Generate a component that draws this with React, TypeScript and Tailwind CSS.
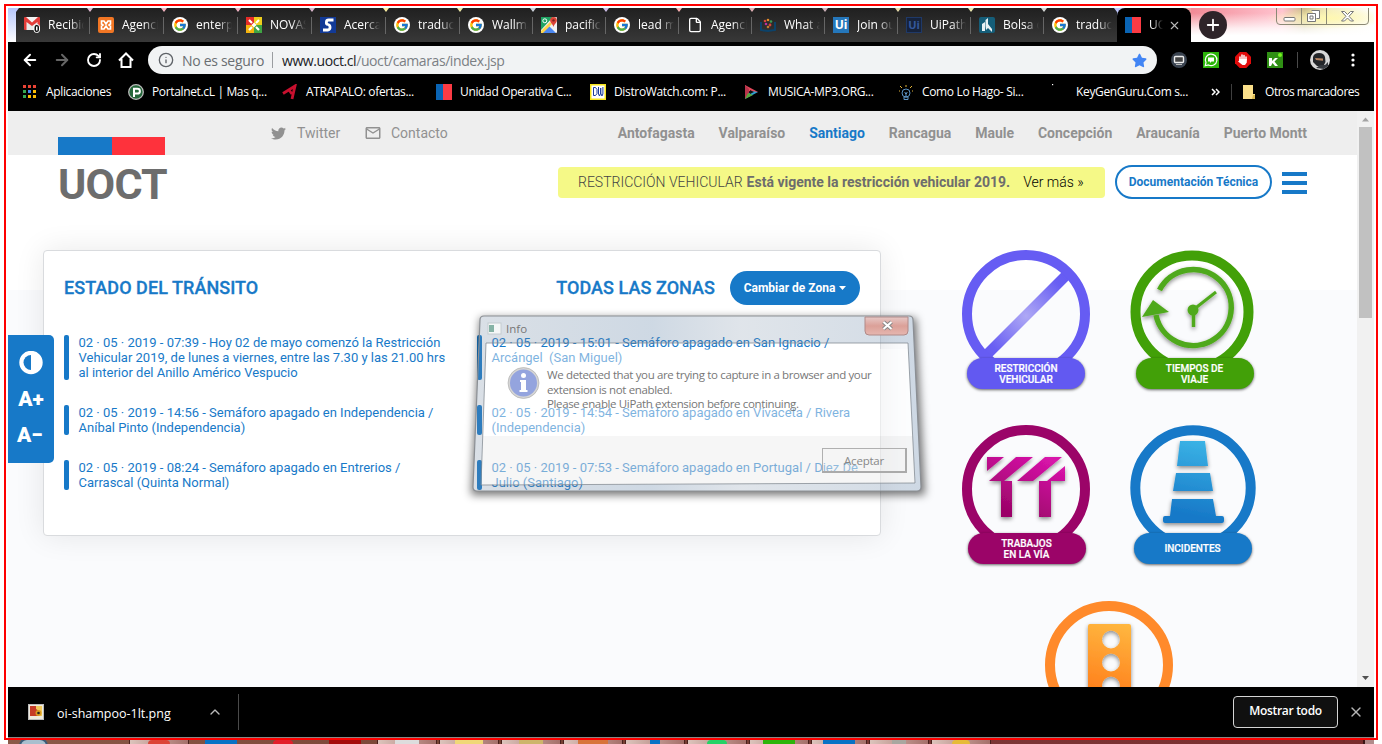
import React from "react";
import { ArrowLeft, ArrowRight, RotateCw, Info, ChevronUp, X, Plus, File } from "lucide-react";
import { FaTwitter, FaStar } from "react-icons/fa";
import { FcGoogle } from "react-icons/fc";
import { MdMailOutline } from "react-icons/md";

const ui = "font-['Open_Sans','Noto_Sans',sans-serif]";

function Flag() {
  return (
    <div className="flex h-4 w-4 shrink-0">
      <div className="w-[7px] bg-[#0a64b4]" />
      <div className="w-[9px] bg-[#fb3b44]" />
    </div>
  );
}

function G() {
  return (
    <span className="flex h-4 w-4 items-center justify-center rounded-full bg-white">
      <FcGoogle size={14} />
    </span>
  );
}

const fav: Record<string, React.ReactNode> = {
  gmail: (
    <svg width="16" height="16" viewBox="0 0 16 16">
      <rect y="0" width="16" height="13" rx="1" fill="#e23c39" />
      <path d="M2.500 13V5L8 9l5.500-4v8z" fill="#e8e8e8" />
      <path d="M2 0h12L8 5.500z" fill="#f3f3f3" />
      <rect x="10" y="7.500" width="5.500" height="8" rx="2.500" fill="#111" stroke="#fff" strokeWidth="1" />
      <rect x="12" y="9.500" width="1.500" height="4" fill="#fff" />
    </svg>
  ),
  xampp: (
    <svg width="16" height="16" viewBox="0 0 16 16">
      <rect width="16" height="16" rx="2" fill="#f27624" />
      <path d="M3.500 4H6l2 3 2-3h2.500v3l-1.500 1 1.500 1v3H10L8 9l-2 3H3.500V9L5 8 3.500 7z" fill="none" stroke="#fff" strokeWidth="1.600" />
    </svg>
  ),
  nova: (
    <svg width="16" height="16" viewBox="0 0 16 16">
      <rect width="8" height="8" fill="#e52c27" />
      <rect x="8" width="8" height="8" fill="#efcf1c" />
      <rect y="8" width="8" height="8" fill="#f5b40f" />
      <rect x="8" y="8" width="8" height="8" fill="#3fa443" />
      <path d="M3 3l3 3M13 3l-3 3M3 13l3-3M13 13l-3-3" stroke="#fff" strokeWidth="2.200" />
      <path d="M8 5.500L10.500 8 8 10.500 5.500 8z" fill="#fff" />
    </svg>
  ),
  s: (
    <svg width="16" height="16" viewBox="0 0 16 16">
      <rect width="16" height="16" fill="#123a97" />
      <path d="M13.500 3H8.500C6 3 5.500 7 8 7.500s3 4.500 0 5.500H3" fill="none" stroke="#fff" strokeWidth="2.800" />
    </svg>
  ),
  maps: (
    <svg width="16" height="16" viewBox="0 0 16 16">
      <rect width="16" height="16" rx="1" fill="#f2f2f2" />
      <path d="M0 0h12L0 13z" fill="#1fa463" />
      <path d="M1 16l7-7 7 7z" fill="#4b87f0" />
      <path d="M0 14L9 5l2 2-9 9H0z" fill="#fdd349" />
      <circle cx="3.800" cy="3.800" r="2" fill="none" stroke="#fff" />
      <path d="M12.500 0a3.400 3.400 0 0 1 3.400 3.400c0 2.400-2.700 3.400-3.400 6.600-.7-3.200-3.400-4.200-3.400-6.600A3.400 3.400 0 0 1 12.500 0z" fill="#dc4437" />
      <circle cx="12.500" cy="3.400" r="1.200" fill="#7c231b" />
    </svg>
  ),
  file: <File size={16} color="#fff" strokeWidth={2} />,
  dots: (
    <svg width="16" height="16" viewBox="0 0 16 16">
      <path d="M1 5v8l7 1 7-1V5" fill="none" stroke="#0c4269" strokeWidth="2" />
      <g>
        <circle cx="5" cy="4" r="1.300" fill="#d6453a" /><circle cx="8" cy="3" r="1.300" fill="#e08a2b" />
        <circle cx="11" cy="4.500" r="1.300" fill="#3f9b55" /><circle cx="6" cy="7" r="1.300" fill="#b534a0" />
        <circle cx="10" cy="8" r="1.400" fill="#d6453a" /><circle cx="8" cy="10" r="1.300" fill="#c07a2b" />
      </g>
    </svg>
  ),
  ui: <span className="flex h-4 w-4 items-center justify-center bg-[#2577bb] text-[12px] font-bold text-white">Ui</span>,
  ui2: <span className="flex h-4 w-4 items-center justify-center border border-[#1f3968] bg-[#17233b] text-[11px] font-bold text-[#35599b]">Ui</span>,
  bolsa: (
    <svg width="16" height="16" viewBox="0 0 16 16">
      <rect width="16" height="16" rx="2" fill="#155e79" />
      <path d="M3 14V7l3-2v9zM6.500 9V3L9 1v6l4 5v3l-4-4-2 2z" fill="#e9f1f4" />
    </svg>
  ),
};

const tabs: [string, string][] = [
  ["gmail", "Recibidos"], ["xampp", "Agencia"], ["g", "enterprise"], ["nova", "NOVASUR"], ["s", "Acerca de"],
  ["g", "traductor"], ["g", "Wallmart"], ["maps", "pacifico"], ["g", "lead m"], ["file", "Agencia"],
  ["dots", "What a"], ["ui", "Join our"], ["ui2", "UiPath"], ["bolsa", "Bolsa d"], ["g", "traductor"],
];

function TabStrip() {
  return (
    <div className="flex h-[34px] bg-[linear-gradient(90deg,#b9c8ff_0%,#e5b7c8_7%,#ffb3bd_14%,#d9b4d0_22%,#fff3a0_28%,#eee9a4_33%,#b7c3ff_42%,#ffb0b0_48%,#c9b0b8_60%,#f7f2a0_68%,#b9c3ff_82%,#ef9d9d_86%,#f6a5aa_91%,#fff_96%)]">
      <div className="h-full w-2 bg-gradient-to-b from-[#b6c6fb] to-white" />
      <div className="flex shrink-0">
        {tabs.map(([k, label], i) => (
          <div key={i} className={"flex h-[34px] items-center overflow-hidden bg-gradient-to-b from-[#202020] to-[#383838] pl-2 [clip-path:polygon(0_4px,3px_0,calc(100%-3px)_0,100%_4px,100%_100%,0_100%)] " + (i < 6 ? "w-[74px]" : "w-[73px]")}>
            <div className="flex h-4 w-4 shrink-0 items-center justify-center">{k === "g" ? <G /> : fav[k]}</div>
            <div className="ml-2 w-[36px] shrink-0 overflow-hidden text-[12px] whitespace-nowrap text-white [mask-image:linear-gradient(90deg,#000_60%,transparent)]">{label}</div>
            {i < 14 && <div className="ml-auto h-[17px] w-px shrink-0 bg-[#666]" />}
          </div>
        ))}
      </div>
      <div className="flex w-[74px] shrink-0 items-center rounded-t-lg bg-black pl-2">
        <Flag />
        <div className="ml-2 w-[14px] overflow-hidden text-[12px] whitespace-nowrap text-white [mask-image:linear-gradient(90deg,#000_20%,transparent)]">UOCT</div>
        <X size={13} color="#b9b9b9" className="ml-[5px]" />
      </div>
      <div className="flex flex-1 bg-[radial-gradient(ellipse_at_75%_30%,#fff8b0_0%,transparent_32%),linear-gradient(180deg,transparent_15%,#ffffffcc_60%,#fff_80%),linear-gradient(90deg,#f28a96,#ffc4d0_50%,#c9b98a_62%,#f3ecc0_75%,#fff)] pl-2">
        <div className="mt-[3px] flex h-7 w-7 items-center justify-center rounded-full bg-[#2e2429]"><Plus size={18} color="#fff" strokeWidth={2.4} /></div>
        <svg className="ml-auto mr-[4px]" width="94" height="18" viewBox="0 0 94 18" fill="none">
          <path d="M.5 0v13q0 3.500 3.500 3.500h85q3.500 0 3.500-3.500V0M25.500 0v16.500M50.500 0v16.500" stroke="#8b8975" />
          <rect x="8" y="9.500" width="11" height="3.500" rx="1" fill="#fff" stroke="#777" />
          <path d="M35.500 2.500h8v8h-3M31.500 5.500h8v8h-8zM34 8h3v3h-3z" fill="#fff" stroke="#777" />
          <path d="M65.500 3.500h3l3 3 3-3h3l-4.500 4.800 4.500 4.700h-3l-3-3-3 3h-3l4.500-4.700z" fill="#fff" stroke="#777" />
        </svg>
      </div>
    </div>
  );
}

function Toolbar() {
  return (
    <div className="flex h-[36px] items-center pl-[13px]">
      <ArrowLeft size={18} color="#fff" strokeWidth={2.6} />
      <ArrowRight size={18} color="#666" strokeWidth={2.6} className="ml-[14px]" />
      <RotateCw size={16} color="#fff" strokeWidth={2.8} className="ml-[15px]" />
      <svg className="ml-[15px]" width="18" height="18" viewBox="0 0 18 18"><path d="M2 9.500L9 2.500l7 7M4.500 8v8h9V8" fill="none" stroke="#fff" strokeWidth="2" /></svg>
      <div className="ml-[13px] flex h-7 w-[1009px] items-center rounded-full bg-[#f1f3f4] pl-[10px] text-[14px]">
        <Info size={16} color="#5f6368" />
        <span className="ml-2 w-[82px] whitespace-nowrap text-[#6a6e72] tracking-[-0.3px]">No es seguro</span>
        <div className="ml-2 h-4 w-px bg-[#9a9da0]" />
        <span className="ml-[9px] whitespace-nowrap text-[#7b7f84] tracking-[-0.42px]"><span className="text-[#202124]">www.uoct.cl</span>/uoct/camaras/index.jsp</span>
        <FaStar size={15} color="#4285f4" className="ml-auto mr-[10px]" />
      </div>
      <svg className="ml-[14px]" width="16" height="16" viewBox="0 0 16 16"><circle cx="8" cy="8" r="8" fill="#3a4350" /><rect x="3.500" y="4.500" width="9" height="6" rx="1" fill="#444" stroke="#eee" strokeWidth="1.400" /><path d="M5 12.500h6" stroke="#bbb" /></svg>
      <svg className="ml-4" width="16" height="16" viewBox="0 0 16 16"><rect width="16" height="16" fill="#2cb50a" /><path d="M2.200 13.800l.8-3.300A5.800 5.800 0 1 1 5.500 13z" fill="none" stroke="#fff" strokeWidth="1.200" /><path d="M5 5.500h6v4H8.500L7 11V9.500H5z" fill="#fff" /></svg>
      <svg className="ml-4" width="16" height="16" viewBox="0 0 16 16"><path d="M4.700 0h6.600L16 4.700v6.600L11.300 16H4.700L0 11.300V4.700z" fill="#e20b0b" /><path d="M5 8V5M7 7V3M9 7V3.500M11 8V5" stroke="#fff" strokeWidth="1.500" strokeLinecap="round" /><path d="M4.300 7h7.500v3.500L10 13H7.500L3 9.500l1-.8z" fill="#fff" /></svg>
      <svg className="ml-4" width="16" height="16" viewBox="0 0 16 16"><rect width="16" height="16" fill="#2f8f14" /><path d="M2 6h3v3l3-3h3L7.500 9.500 11 14H8l-2.500-3L4 14H2z" fill="#fff" /><circle cx="13" cy="3" r="2" fill="#74f51d" /></svg>
      <div className="ml-[14px] h-4 w-px bg-[#4a4a4a]" />
      <svg className="ml-[12px]" width="20" height="20" viewBox="0 0 20 20"><circle cx="10" cy="10" r="10" fill="#d8d8d8" /><path d="M3 12V7q1-4 6-4t6 4l.5 5-2 4H7z" fill="#242629" /><path d="M5 8l8 .5v2.300L6 10z" fill="#b98663" /><path d="M6 18l4-3h5l3-3v4l-4 3z" fill="#35383d" /></svg>
      <svg className="ml-[20px]" width="6" height="16" viewBox="0 0 6 16" fill="#fff"><circle cx="3" cy="3" r="1.600" /><circle cx="3" cy="8" r="1.600" /><circle cx="3" cy="13" r="1.600" /></svg>
    </div>
  );
}

const marks: [React.ReactNode, string][] = [
  [<svg key="p" width="16" height="16" viewBox="0 0 16 16"><circle cx="8" cy="8" r="7.300" fill="#24673a" stroke="#bbb" strokeWidth="1.300" /><path d="M6 13V4.800h3.500a2.400 2.400 0 0 1 0 4.800H6" fill="none" stroke="#fff" strokeWidth="2" /></svg>, "Portalnet.cL | Mas q..."],
  [<svg key="a" width="16" height="16" viewBox="0 0 16 16"><path d="M1 9.500L13 2l-3 13M7 6l3 4" fill="none" stroke="#c8102e" strokeWidth="2.800" /></svg>, "ATRAPALO: ofertas..."],
  [<Flag key="f" />, "Unidad Operativa C..."],
  [<svg key="d" width="16" height="16" viewBox="0 0 16 16"><rect x=".75" y=".75" width="14.500" height="14.500" fill="#fff" stroke="#f7e51c" strokeWidth="1.500" /><path d="M3.500 3.500v8M3.500 3.500h2l1.500 2v4l-1.500 2h-2M8.500 3v7l1 2 1.200-3V4v5l1.200 3 1-2V3" fill="none" stroke="#1c3d9c" /></svg>, "DistroWatch.com: P..."],
  [<svg key="m" width="16" height="16" viewBox="0 0 16 16"><path d="M1 1l13 7-5 1-8-4z" fill="#e3485a" /><path d="M1 1v14l4-3V5z" fill="#b8344b" /><path d="M1 15l13-7-7-1z" fill="#2f9fd0" /><path d="M1 15l3-6 5 2z" fill="#5aa53b" /><path d="M6 6l4 2-4 2z" fill="#111" /></svg>, "MUSICA-MP3.ORG..."],
  [<svg key="c" width="16" height="16" viewBox="0 0 16 16" fill="none"><circle cx="8" cy="9" r="4" stroke="#5c93c4" /><path d="M6 13h4v2.500H6zM8 8v5M6.500 8.500L8 10l1.500-1.500" stroke="#5c93c4" /><path d="M8 1v2M2 2l2 2M14 2l-2 2M1 7h1M14 7h1" stroke="#e1b338" /></svg>, "Como Lo Hago- Si..."],
  [<svg key="k" width="16" height="20" viewBox="0 0 16 20"><rect y="2" width="1.200" height="1.200" fill="#fff" /></svg>, "KeyGenGuru.Com s..."],
];

const appColors = ["bg-[#ea4335]", "bg-[#ea4335]", "bg-[#ea4335]", "bg-[#34a853]", "bg-[#4285f4]", "bg-[#fbbc05]", "bg-[#34a853]", "bg-[#fbbc05]", "bg-[#fbbc05]"];

function Bookmarks() {
  return (
    <div className="flex h-[33px] items-center overflow-hidden pb-[6px] text-[12px] tracking-[-0.35px] whitespace-nowrap text-white">
      <div className="flex w-[120px] shrink-0 items-center pl-[15px]">
        <div className="grid grid-cols-3 gap-[2px]">{appColors.map((c, i) => <div key={i} className={"h-[3px] w-[3px] " + c} />)}</div>
        <span className="ml-[10px]">Aplicaciones</span>
      </div>
      {marks.map(([ic, t], i) => (
        <div key={i} className="flex h-5 w-[154px] shrink-0 items-center gap-2">{ic}<span>{t}</span></div>
      ))}
      <span className="w-[18px] pl-[5px]"><svg width="9" height="8" viewBox="0 0 9 8" fill="none" className="mt-px"><path d="M1 1l3 3-3 3M5 1l3 3-3 3" stroke="#fff" strokeWidth="1.500" /></svg></span>
      <div className="ml-[7px] h-4 w-px bg-[#3f3f3f]" />
      <svg className="ml-[10px]" width="14" height="16" viewBox="0 0 14 16"><path d="M1 1h10v9h2v5H1z" fill="#fbe08a" /><path d="M10 15l1-4h2v4z" fill="#d9b84e" /></svg>
      <span className="ml-[9px] tracking-[-0.45px]">Otros marcadores</span>
    </div>
  );
}

const cities = ["Antofagasta", "Valparaíso", "Santiago", "Rancagua", "Maule", "Concepción", "Araucanía", "Puerto Montt"];

function Header() {
  return (
    <>
      <div className="flex h-[44px] items-center bg-[#eee] text-[14px] text-[#919191]">
        <div className="ml-[50px] flex h-[18px] w-[107px] self-end"><div className="flex-1 bg-[#1779c8]" /><div className="flex-1 bg-[#fe323c]" /></div>
        <FaTwitter size={15} className="ml-[106px]" />
        <span className="ml-[11px] w-[44px]">Twitter</span>
        <MdMailOutline size={18} className="ml-[23px]" />
        <span className="ml-[9px]">Contacto</span>
        <nav className="mr-[50px] ml-auto flex gap-[23.900px] font-bold">
          {cities.map((c) => <span key={c} className={c === "Santiago" ? "text-[#1779c8]" : ""}>{c}</span>)}
        </nav>
      </div>
      <div className="flex h-[95px] items-start pr-[50px]">
        <div className="mt-[4px] ml-[50px] text-[43px] leading-[50px] font-bold tracking-[-0.8px] text-[#6d6d6d]">UOCT</div>
        <div className="mt-[12px] ml-auto flex h-[31px] w-[547px] items-center rounded-[4px] bg-[#f5f987] pl-5 text-[14px] whitespace-nowrap text-[#6d6d6d]">
          <span className="font-light text-[#444]">RESTRICCIÓN VEHICULAR</span><b className="ml-1">Está vigente la restricción vehicular 2019.</b><span className="ml-[13px] font-light text-black">Ver más »</span>
        </div>
        <div className="mt-[10px] ml-[10px] flex h-[34px] w-[157px] items-center justify-center rounded-full border-2 border-[#1779c8] text-[12px] font-bold text-[#1779c8]">Documentación Técnica</div>
        <div className="mt-[17px] ml-[10px] flex w-[25px] flex-col gap-[5px]"><div className="h-1 bg-[#1779c8]" /><div className="h-1 bg-[#1779c8]" /><div className="h-1 bg-[#1779c8]" /></div>
      </div>
    </>
  );
}

const news: string[][] = [
  ["02 · 05 · 2019 - 07:39 - Hoy 02 de mayo comenzó la Restricción", "Vehicular 2019, de lunes a viernes, entre las 7.30 y las 21.00 hrs", "al interior del Anillo Américo Vespucio"],
  ["02 · 05 · 2019 - 15:01 - Semáforo apagado en San Ignacio /", "Arcángel\u00a0 (San Miguel)"],
  ["02 · 05 · 2019 - 14:56 - Semáforo apagado en Independencia /", "Aníbal Pinto (Independencia)"],
  ["02 · 05 · 2019 - 14:54 - Semáforo apagado en Vivaceta / Rivera", "(Independencia)"],
  ["02 · 05 · 2019 - 08:24 - Semáforo apagado en Entrerios /", "Carrascal (Quinta Normal)"],
  ["02 · 05 · 2019 - 07:53 - Semáforo apagado en Portugal / Diez De", "Julio (Santiago)"],
];

function Card() {
  return (
    <div className="ml-[35px] h-[286px] w-[838px] shrink-0 rounded-[4px] border border-[#d9dbde] bg-white px-5 pt-5 text-[#1779c8] shadow-[0_0_30px_rgba(0,0,0,0.09)]">
      <div className="flex h-[34px] items-center text-[18px] font-bold">
        <span className="pb-[2px] font-medium tracking-[0.05px] [-webkit-text-stroke:0.3px_#1779c8]">ESTADO DEL TRÁNSITO</span>
        <span className="ml-auto pb-[2px] font-medium tracking-[0.05px] [-webkit-text-stroke:0.3px_#1779c8]">TODAS LAS ZONAS</span>
        <div className="ml-[15px] flex h-[34px] w-[130px] items-center justify-center gap-1 rounded-full bg-[#1779c8] text-[12px] text-white">
          Cambiar de Zona<svg width="7" height="4" viewBox="0 0 7 4"><path d="M0 0h7L3.500 4z" fill="#fff" /></svg>
        </div>
      </div>
      <div className="mt-[30px] grid grid-cols-[413px_1fr] gap-y-[25px]">
        {news.map((lines, i) => (
          <div key={i} className="flex gap-[9.500px] text-[13px] leading-[15px] whitespace-nowrap">
            <div className="w-[5px] rounded-[2px] bg-[#1779c8]" />
            <div>{lines.map((l) => <div key={l}>{l}</div>)}</div>
          </div>
        ))}
      </div>
    </div>
  );
}

function Badge({ color, lines }: { color: string; lines: string[] }) {
  return (
    <div className={"relative mx-auto mt-[-20px] flex h-[31px] w-[118px] flex-col items-center justify-center rounded-full text-[10px] leading-[11px] font-medium text-white shadow-[0_1px_3px_rgba(0,0,0,0.6)] [-webkit-text-stroke:0.2px_#fff] " + color}>
      {lines.map((l) => <span key={l}>{l}</span>)}
    </div>
  );
}

function Icons() {
  return (
    <div className="ml-[81px] grid grid-cols-[128px_128px] content-start gap-x-[39px]">
      <svg width="0" height="0" className="absolute">
        <defs>
          <radialGradient id="rv" gradientUnits="userSpaceOnUse" cx="64" cy="66" r="56"><stop offset="0" stopColor="#aea8f5" /><stop offset=".8" stopColor="#695ff3" /><stop offset="1" stopColor="#665cf3" /></radialGradient>
          <linearGradient id="pk" gradientUnits="userSpaceOnUse" x1="80" y1="30" x2="50" y2="90"><stop offset="0" stopColor="#d813aa" /><stop offset="1" stopColor="#9b0468" /></linearGradient>
          <linearGradient id="bl" gradientUnits="userSpaceOnUse" x1="75" y1="15" x2="60" y2="90"><stop offset="0" stopColor="#3bb4e6" /><stop offset="1" stopColor="#1779c8" /></linearGradient>
          <linearGradient id="or" gradientUnits="userSpaceOnUse" x1="80" y1="22" x2="65" y2="88"><stop offset="0" stopColor="#ffb840" /><stop offset="1" stopColor="#ff841f" /></linearGradient>
          <filter id="sh" x="-30%" y="-30%" width="160%" height="160%"><feDropShadow dx="0" dy="2" stdDeviation="2" floodOpacity=".45" /></filter>
        </defs>
      </svg>
      <div className="h-[175px]">
        <svg width="128" height="128" viewBox="0 0 128 128" fill="none">
          <path d="M24 105.500L107 22.500" stroke="url(#rv)" strokeWidth="10.500" />
          <circle cx="64" cy="64" r="59" stroke="#665cf3" strokeWidth="10" />
        </svg>
        <Badge color="bg-[#6259f1]" lines={["RESTRICCIÓN", "VEHICULAR"]} />
      </div>
      <div className="h-[175px]">
        <svg width="128" height="128" viewBox="0 0 128 128" fill="none">
          <circle cx="63" cy="62" r="56.500" stroke="#42a008" strokeWidth="10" />
          <g filter="url(#sh)" stroke="#50a91b">
            <path d="M30.500 40A38 38 0 1 1 27 65" strokeWidth="5.500" />
            <path d="M24 50L40 62 13 67z" fill="#50a91b" stroke="none" />
            <circle cx="64" cy="60" r="5.500" fill="#50a91b" stroke="none" />
            <path d="M64 60l23-18" strokeWidth="3" /><path d="M64.500 60v17" strokeWidth="3.500" />
          </g>
        </svg>
        <div className="ml-[1px] pl-[2px]"><Badge color="bg-[#42a008]" lines={["TIEMPOS DE", "VIAJE"]} /></div>
      </div>
      <div className="h-[176px]">
        <svg width="128" height="128" viewBox="0 0 128 128" fill="none">
          <circle cx="64" cy="64" r="59" stroke="#9b0468" strokeWidth="10" />
          <path filter="url(#sh)" fill="url(#pk)" d="M25 32h17L25 46zM54 32h17L42 56H27zM83 32h17L71 56H55zM103 41v15H85zM39 56h11v36H39zM77 56h12v36H77z" />
        </svg>
        <div className="pl-px"><Badge color="bg-[#9b0468]" lines={["TRABAJOS", "EN LA VÍA"]} /></div>
      </div>
      <div className="h-[176px]">
        <svg width="128" height="128" viewBox="0 0 128 128" fill="none">
          <circle cx="64" cy="63" r="57.700" stroke="#1779c8" strokeWidth="10" />
          <path filter="url(#sh)" fill="url(#bl)" d="M51 16h25l3 25H48zM47 48h34l3 18H44zM43 74h41l3 17h6q2 0 2 2v3q0 2-2 2H36q-2 0-2-2v-3q0-2 2-2h5z" />
        </svg>
        <div className="-ml-[1px]"><Badge color="bg-[#1779c8]" lines={["INCIDENTES"]} /></div>
      </div>
      <div className="col-span-2 pl-[83px]">
        <svg width="128" height="128" viewBox="0 0 128 128" fill="none">
          <circle cx="64" cy="64" r="59" stroke="#ff8a2b" strokeWidth="10" />
          <path filter="url(#sh)" fill="url(#or)" fillRule="evenodd" d="M45 23h39q2 0 2 2v80H43V25q0-2 2-2zM57 38.500a9 9 0 1 0 18 0a9 9 0 1 0-18 0zM57 61.500a9 9 0 1 0 18 0a9 9 0 1 0-18 0zM57 84.500a9 9 0 1 0 18 0a9 9 0 1 0-18 0z" />
        </svg>
      </div>
    </div>
  );
}

function Dialog() {
  return (
    <div className={"absolute top-[300px] left-[460px] h-[210px] w-[480px] text-[11.5px] text-[#777] " + ui}>
      <svg width="480" height="210" viewBox="0 0 480 210" fill="none" className="absolute inset-0">
        <defs>
          <filter id="blur" x="-10%" y="-10%" width="120%" height="125%"><feGaussianBlur stdDeviation="4.500" /></filter>
          <mask id="out"><rect width="480" height="210" fill="#fff" /><path d="M24 16H449q4 0 4 4L461 187q0 4-4 4H17q-4 0-4-4L20 20q0-4 4-4z" fill="#000" /></mask>
          <linearGradient id="frame" x1="0" x2="1"><stop offset="0" stopColor="#7187a0" stopOpacity=".26" /><stop offset=".4" stopColor="#5c7fa4" stopOpacity=".3" /><stop offset=".6" stopColor="#7187a0" stopOpacity=".22" /><stop offset="1" stopColor="#5c7fa4" stopOpacity=".28" /></linearGradient>
          <linearGradient id="red" x1="0" y1="0" x2="0" y2="1"><stop offset="0" stopColor="#e6c8c6" /><stop offset=".5" stopColor="#dba098" /><stop offset="1" stopColor="#e6b7b0" /></linearGradient>
        </defs>
        <g mask="url(#out)"><path filter="url(#blur)" d="M20 18H456L465 195H11z" fill="#000" fillOpacity=".55" /></g>
        <path fillRule="evenodd" d="M24 16H449q4 0 4 4L461 187q0 4-4 4H17q-4 0-4-4L20 20q0-4 4-4zM26 43L21 185 455 183 448 43z" fill="url(#frame)" />
        <path d="M24 16H449q4 0 4 4L461 187q0 4-4 4H17q-4 0-4-4L20 20q0-4 4-4z" stroke="#8b8f94" strokeWidth="1.200" />
        <path d="M26 49H448L455 183 21 185z" fill="#fff" fillOpacity=".44" />
        <path d="M23 136H453L455 183 21 185z" fill="#000" fillOpacity=".035" />
        <path d="M26 43H448L455 183 21 185z" stroke="#7f878f" strokeOpacity=".75" />
        <path d="M405 17h43v14q0 4-4 4h-35q-4 0-4-4z" fill="url(#red)" stroke="#b08a88" />
        <path d="M423.500 22l8 7M431.500 22l-8 7" stroke="#888" strokeWidth="4" /><path d="M423.500 22l8 7M431.500 22l-8 7" stroke="#fff" strokeWidth="2" />
        <rect x="28" y="23" width="13" height="11" fill="#f5f7f7" stroke="#c4ccd0" /><rect x="29" y="25" width="5" height="7" fill="#86b3a6" />
        <circle cx="63.500" cy="83" r="14.500" fill="#94a4de" stroke="#d5d5d5" strokeWidth="2" /><circle cx="63.500" cy="83" r="15.500" stroke="#aaa" strokeWidth=".6" />
        <circle cx="63.500" cy="75.500" r="2.500" fill="#fff" /><path d="M60 80h6v10h1.500v2h-8v-2H61v-8h-1z" fill="#fff" />
        <rect x="362.500" y="148.500" width="83" height="23" fill="#f6f6f6" fillOpacity=".2" stroke="#b0b0b0" /><path d="M362 172H446V148" stroke="#aaa" strokeWidth="2" />
      </svg>
      <span className="absolute top-[20px] left-[46px]">Info</span>
      <div className="absolute top-[68px] left-[87px] text-[11.5px] leading-[14.500px] tracking-[-0.36px] whitespace-nowrap">We detected that you are trying to capture in a browser and your<br />extension is not enabled.<br />Please enable UiPath extension before continuing.</div>
      <span className="absolute top-[152px] left-[384px] tracking-[-0.2px] text-[#888]">Aceptar</span>
    </div>
  );
}

function SideTools() {
  return (
    <div className="absolute top-[335px] left-[8px] flex h-[128px] w-[46px] flex-col items-center rounded-r-[5px] bg-[#1779c8] pt-[16px] font-['Roboto',sans-serif] text-[21px] leading-[36px] font-black text-white">
      <svg width="24" height="24" viewBox="0 0 24 24"><circle cx="12" cy="11.500" r="9.700" fill="#fff" stroke="#fff" strokeWidth="4" /><path d="M12 4a7.500 7.500 0 0 0 0 15z" fill="#1779c8" /></svg>
      <span className="mt-[6px]">A+</span>
      <span className="pr-[2px]">A−</span>
    </div>
  );
}

const tasks: [string, string, string][] = [
  ["w-[58px]", "w-[22px] rounded-t-full bg-[#dc4436]", "b"], ["w-[58px]", "w-[32px] bg-[#0872c5]", ""], ["w-[58px]", "w-[20px] rounded-t-full bg-[#e21f2b]", ""],
  ["w-[58px]", "w-[32px] bg-[#a40b0b]", ""], ["w-[58px]", "w-[24px] bg-[#ddd]", "b"], ["w-[58px]", "w-[28px] bg-[#f0d878]", "b"],
  ["w-[58px]", "w-[24px] bg-[#cdb56b]", "b"], ["w-[58px]", "w-[30px] bg-[#d8743a]", "b"], ["w-[58px]", "w-[10px] bg-[#0872c5]", "b"],
  ["w-[58px]", "w-[20px] rounded-t-full bg-[#25d366]", "b"], ["w-[58px]", "w-[32px] bg-[#2cb50a]", "b"], ["w-[54px]", "w-[32px] bg-[#0872c5]", "b"],
  ["w-[58px]", "w-[14px] bg-[#a9a7a0]", "b"], ["w-[58px]", "w-[18px] rounded-t-full bg-[#e6bb37]", "b"],
];

function Taskbar() {
  return (
    <div className="flex h-[7px] gap-1 overflow-hidden border-t border-[#8d8583] bg-[linear-gradient(90deg,#8a5a48,#754032_40%,#7b3535_75%,#7a2d2d)]">
      <div className="mr-[78px] ml-[11px] h-4 w-[29px] rounded-full border-2 border-[#3c5a77] bg-[#a9bfce]" />
      {tasks.map(([w, c, b], i) => (
        <div key={i} className={"flex h-[6px] shrink-0 justify-center pt-[2px] " + w + (b ? " bg-gradient-to-r from-[#dcc4bc] to-[#a5706a] outline outline-1 outline-[#4a201c]" : "")}><div className={"h-1 " + c} /></div>
      ))}
      <div className="ml-auto w-[11px] shrink-0 border-l-2 border-[#3d1515] bg-[#b18b8b]" />
    </div>
  );
}

export default function App() {
  return (
    <div className="relative h-[744px] w-[1382px] overflow-hidden bg-white px-2 pt-2 font-['Roboto',sans-serif]">
      <div className={"h-[103px] w-[1366px] overflow-hidden bg-black " + ui}>
        <TabStrip />
        <Toolbar />
        <Bookmarks />
      </div>
      <div className="flex h-[576px] w-[1366px]">
        <div className="h-full w-[1349px] overflow-hidden bg-[linear-gradient(180deg,#fff_179px,#fafbfd_179px)]">
          <Header />
          <div className="flex"><Card /><Icons /></div>
        </div>
        <div className="flex w-[17px] flex-col items-center bg-[#f1f1f1]">
          <svg width="17" height="16" viewBox="0 0 17 16"><path d="M5 10.500l3.500-4 3.500 4z" fill="#a3a3a3" /></svg>
          <div className="h-[191px] w-[13px] bg-[#c1c1c1]" />
          <svg className="mt-auto" width="17" height="17" viewBox="0 0 17 17"><path d="M5 6l3.500 4L12 6z" fill="#505050" /></svg>
        </div>
      </div>
      <div className={"flex h-[50px] w-[1366px] items-center bg-black text-[12.500px] text-white " + ui}>
        <svg className="ml-5" width="16" height="16" viewBox="0 0 16 16"><rect x=".5" y=".5" width="15" height="15" fill="#efe9dd" stroke="#bbb" /><rect x="2" y="2" width="12" height="10" fill="#f0c95a" /><path d="M2 2h6v3l3 2v5H2z" fill="#c63a26" /><circle cx="10.500" cy="9" r="3" fill="#d99a23" /><circle cx="10.500" cy="9" r="1.300" fill="#222" /></svg>
        <span className="mt-[5px] ml-[13px] w-[115px]">oi-shampoo-1lt.png</span>
        <ChevronUp size={16} color="#bbb" className="ml-[35px]" />
        <div className="ml-[15px] h-[36px] w-px bg-[#4a4a4a]" />
        <div className="ml-auto flex h-8 w-[105px] items-center justify-center rounded-[4px] border border-[#d5d5d5] bg-[#101010] pb-[2px] text-[12px] font-semibold tracking-[-0.3px]">Mostrar todo</div>
        <X size={16} color="#b5b5b5" className="mr-[10px] ml-[10px]" />
      </div>
      <div className="w-[1366px]"><Taskbar /></div>
      <Dialog />
      <SideTools />
      <div className="pointer-events-none absolute top-[4px] left-[4px] h-[736px] w-[1374px] border-2 border-[#fe0000]" />
    </div>
  );
}
